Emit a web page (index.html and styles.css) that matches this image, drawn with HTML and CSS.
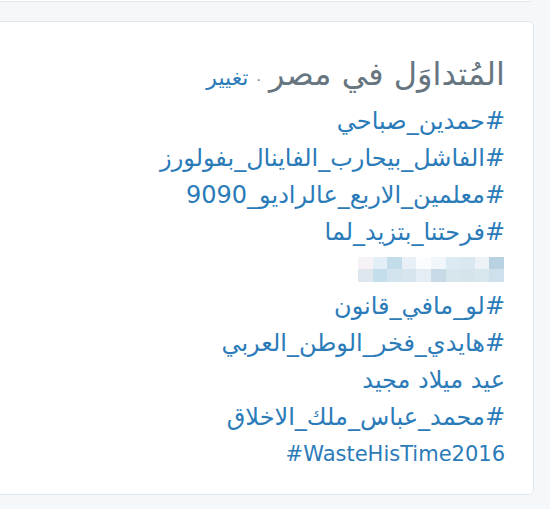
FILE: index.html
```html
<!DOCTYPE html>
<html lang="ar" dir="rtl">
<head>
    <meta charset="UTF-8">
    <meta name="viewport" content="width=device-width, initial-scale=1.0">
    <title>المتداول في مصر</title>
    <link rel="stylesheet" href="styles.css">
</head>
<body>
    <div class="column">
        <div class="card card-prev"></div>

        <div class="card trends">
            <div class="trends-header">
                <h3>المُتداوَل في مصر</h3>
                <span class="dot">·</span>
                <a href="#" class="change">تغيير</a>
            </div>

            <ul class="trend-list">
                <li><a href="#">#حمدين_صباحي</a></li>
                <li><a href="#">#الفاشل_بيحارب_الفاينال_بفولورز</a></li>
                <li><a href="#">#معلمين_الاربع_عالراديو_9090</a></li>
                <li><a href="#">#فرحتنا_بتزيد_لما</a></li>
                <li class="hidden-trend">
                    <div class="pixelated">
                        <span class="c1"></span><span class="c2"></span><span class="c3"></span><span class="c4"></span><span class="c5"></span>
                        <span class="c6"></span><span class="c7"></span><span class="c8"></span><span class="c9"></span><span class="c10"></span>
                        <span class="d1"></span><span class="d2"></span><span class="d3"></span><span class="d4"></span><span class="d5"></span>
                        <span class="d6"></span><span class="d7"></span><span class="d8"></span><span class="d9"></span><span class="d10"></span>
                    </div>
                </li>
                <li><a href="#">#لو_مافي_قانون</a></li>
                <li><a href="#">#هايدي_فخر_الوطن_العربي</a></li>
                <li><a href="#">عيد ميلاد مجيد</a></li>
                <li><a href="#">#محمد_عباس_ملك_الاخلاق</a></li>
                <li class="latin"><a href="#" dir="ltr">#WasteHisTime2016</a></li>
            </ul>
        </div>
    </div>
</body>
</html>
```

FILE: styles.css
```css
body {
    margin: 0;
    background: #f5f8fa;
    font-family: "DejaVu Sans", sans-serif;
    overflow: hidden;
}
.column {
    width: 543px;
    margin-right: 16px;
    margin-left: auto;
    direction: ltr;
}
.card {
    background: white;
    border: 1px solid #e1e8ed;
    border-radius: 5px;
}
.card-prev {
    height: 20px;
    margin-top: -20px;
    margin-bottom: 19px;
}
.trends {
    direction: rtl;
    padding: 34px 28px 21px 20px;
}
.trends-header {
    display: flex;
    align-items: baseline;
    gap: 8px;
    height: 36px;
    margin-bottom: 11px;
}
.trends-header h3 {
    margin: 0;
    font-size: 32px;
    font-weight: normal;
    color: #66757f;
    line-height: 36px;
}
.dot {
    color: #66757f;
    font-size: 14px;
}
.change {
    color: #2b7bb9;
    font-size: 22px;
    text-decoration: none;
}
.trend-list {
    list-style: none;
    margin: 0;
    padding: 0;
}
.trend-list li {
    line-height: 37px;
    height: 37px;
    font-size: 24px;
}
.trend-list li.latin {
    font-size: 21px;
}
.trend-list a {
    color: #2b7bb9;
    text-decoration: none;
}
.hidden-trend {
    display: flex;
    align-items: center;
}
.pixelated {
    display: grid;
    grid-template-columns: repeat(10, 14.6px);
    grid-template-rows: 12px 13px;
    direction: ltr;
    margin-right: 1px;
}
.c1 { background: #f6f2f5; }
.c2 { background: #e2eff7; }
.c3 { background: #c3dcea; }
.c4 { background: #e9f0f5; }
.c5 { background: #fbfcfd; }
.c6 { background: #f0f6fa; }
.c7 { background: #dbeaf3; }
.c8 { background: #d9e7f0; }
.c9 { background: #edf2f6; }
.c10 { background: #b8d2e2; }
.d1 { background: #dfe7ee; }
.d2 { background: #c5deeb; }
.d3 { background: #d3e4ee; }
.d4 { background: #d6e5ee; }
.d5 { background: #e3edf3; }
.d6 { background: #c7dae6; }
.d7 { background: #d7e5ed; }
.d8 { background: #d5e3eb; }
.d9 { background: #d8e6ee; }
.d10 { background: #cee0eb; }
```
